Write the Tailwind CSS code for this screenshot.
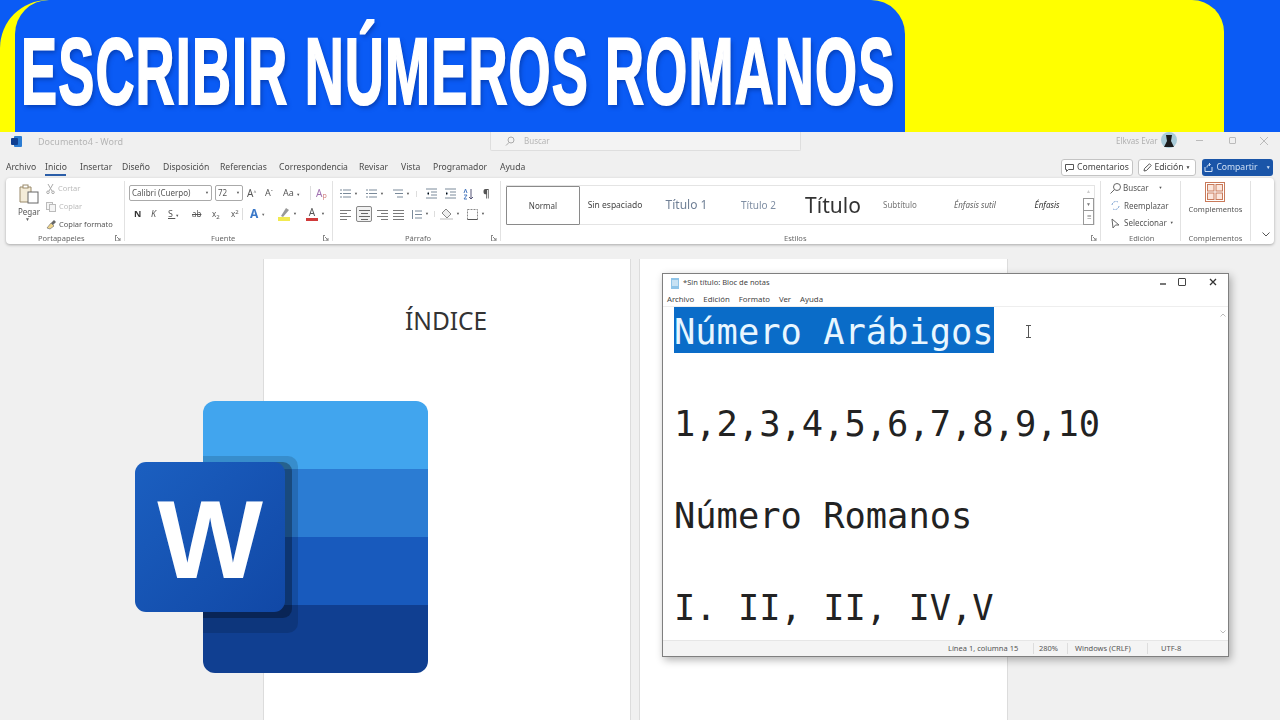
<!DOCTYPE html>
<html lang="es">
<head>
    <meta charset="UTF-8">
    <title>Escribir números romanos</title>
    <script src="https://cdn.jsdelivr.net/npm/@tailwindcss/browser@4"></script>
</head>
<body class="w-[1280px] h-[720px] overflow-hidden bg-[#f0f0f0] font-['Noto_Sans',sans-serif] text-[#444]">
<div class="relative w-[1280px] h-[720px] overflow-hidden">

    <!-- Banner -->
    <header class="h-[132px] bg-[#0a5bf5]">
        <div class="w-[1224px] h-full bg-[#ffff00] rounded-tl-[48px] rounded-tr-[32px]">
            <div class="ml-[15px] w-[890px] h-full bg-[#0a5bf5] rounded-t-[34px] pl-[6px] pt-[6px] overflow-hidden">
                <h1 class="origin-left scale-x-[0.575] whitespace-nowrap font-['Liberation_Sans',sans-serif] font-bold tracking-[2px] text-[94px] leading-[132px] text-white [-webkit-text-stroke:2px_white] [text-shadow:3px_3px_6px_rgba(0,40,130,0.55)]">ESCRIBIR NÚMEROS ROMANOS</h1>
            </div>
        </div>
    </header>

    <!-- Word window -->
    <div class="blur-[0.35px]">
        <!-- title bar -->
        <div class="h-[23px] pb-[4px] flex items-center relative">
            <svg class="ml-[11px] w-[11px] h-[11px]" viewBox="0 0 11 11"><rect x="3" y="0" width="8" height="11" rx="1" fill="#2b7cd3"/><rect x="0" y="2" width="7" height="7" rx="1" fill="#103f91"/></svg>
            <span class="ml-[16px] text-[9px] text-[#b5b5b5]">Documento4  -  Word</span>
            <div class="absolute left-[490px] top-0 w-[311px] h-[19px] bg-[#f3f3f3] border border-t-0 border-[#dedede] rounded-b-[2px] flex items-center pl-[14px] gap-[9px]">
                <svg class="w-[10px] h-[10px]" viewBox="0 0 10 10" fill="none" stroke="#aaa"><circle cx="6" cy="4" r="3"/><path d="M4 6.5 1 9.5"/></svg>
                <span class="text-[8px] text-[#b5b5b5]">Buscar</span>
            </div>
            <span class="absolute left-[1116px] top-[3px] text-[8px] text-[#b0b0b0]">Elkvas Evar</span>
            <svg class="absolute left-[1161px] top-[0px] w-[16px] h-[17px]" viewBox="0 0 16 17"><circle cx="8" cy="8" r="8" fill="#a9cbd8"/><path d="M5 3h6l-1 6 3 6H3l3-6z" fill="#1c1c1c"/></svg>
            <span class="absolute left-[1196px] top-[8px] w-[7px] h-px bg-[#bbb]"></span>
            <span class="absolute left-[1229px] top-[5px] w-[7px] h-[7px] border border-[#bbb] rounded-[1px]"></span>
            <svg class="absolute left-[1260px] top-[5px] w-[8px] h-[8px]" viewBox="0 0 8 8" stroke="#bbb"><path d="M0 0l8 8M8 0l-8 8"/></svg>
        </div>

        <!-- tabs -->
        <div class="h-[23px] relative">
            <nav class="flex pl-[6px] pt-[6px] text-[8.6px] leading-[12px] text-[#4a4a4a]">
                <span class="w-[39px]">Archivo</span>
                <span class="w-[35px] relative">Inicio<i class="absolute left-0 top-[13px] w-[21px] h-[2px] bg-[#2b5ea8]"></i></span>
                <span class="w-[42px]">Insertar</span>
                <span class="w-[41px]">Diseño</span>
                <span class="w-[57px]">Disposición</span>
                <span class="w-[59px]">Referencias</span>
                <span class="w-[80px]">Correspondencia</span>
                <span class="w-[42px]">Revisar</span>
                <span class="w-[32px]">Vista</span>
                <span class="w-[67px]">Programador</span>
                <span>Ayuda</span>
            </nav>
            <div class="absolute left-[1061px] top-[4px] flex gap-[5px] text-[8.6px] text-[#444]">
                <div class="w-[72px] h-[17px] border border-[#c4c4c4] rounded-[3px] bg-white flex items-center justify-center gap-[3px]">
                    <svg class="w-[9px] h-[8px]" viewBox="0 0 9 8" fill="none" stroke="#555"><path d="M.5.5h8v5h-5l-2 2v-2h-1z"/></svg>Comentarios
                </div>
                <div class="w-[58px] h-[17px] border border-[#c4c4c4] rounded-[3px] bg-white flex items-center justify-center gap-[2px]">
                    <svg class="w-[9px] h-[9px]" viewBox="0 0 9 9" fill="none" stroke="#555"><path d="M1 8l.5-2.5L6.5.8l1.7 1.7L3.5 7.500z"/></svg>Edición<span class="text-[5px]">▼</span>
                </div>
                <div class="ml-[1px] w-[71px] h-[17px] rounded-[3px] bg-[#1a55a8] text-[#cfe0f5] flex items-center justify-center gap-[3px]">
                    <svg class="w-[9px] h-[9px]" viewBox="0 0 9 9" fill="none" stroke="#cfe0f5"><path d="M1 4v4.500h7V4M3 4.500c0-2 1.500-3 3-3M5 0l1.500 1.500L5 3"/></svg>Compartir<span class="ml-[5px] text-[5px]">▼</span>
                </div>
            </div>
        </div>

        <!-- ribbon -->
        <div class="mx-[6px] h-[66px] bg-white rounded-[4px] shadow-[0_1px_3px_rgba(0,0,0,0.3)] flex text-[7.500px] text-[#555]">

            <!-- Portapapeles -->
            <section class="w-[119px] shrink-0 border-r border-[#e2e2e2] my-[3px] relative">
                <svg class="absolute left-[13px] top-[3px] w-[20px] h-[20px]" viewBox="0 0 20 20" fill="none" stroke="#9a8a6a"><path d="M1 3h11v15H1z" fill="#f4ecd8"/><rect x="4" y="1" width="5" height="3" fill="#fff"/><rect x="9" y="8" width="10" height="11" fill="#fff" stroke="#666"/></svg>
                <span class="absolute left-[12px] top-[25px] text-[8px] text-[#555]">Pegar</span>
                <span class="absolute left-[19px] top-[35px] text-[5px] text-[#666]">▼</span>
                <div class="absolute left-[40px] top-[1px] flex flex-col gap-[5px] text-[#bbb]">
                    <div class="h-[13px] flex items-center gap-[3px]"><svg class="w-[9px] h-[10px]" viewBox="0 0 9 10" fill="none" stroke="#aaa"><path d="M2 0l4 7M7 0 3 7"/><circle cx="2" cy="8.300" r="1.300"/><circle cx="7" cy="8.300" r="1.300"/></svg>Cortar</div>
                    <div class="h-[13px] flex items-center gap-[3px]"><svg class="w-[10px] h-[10px]" viewBox="0 0 10 10" fill="#f5f5f5" stroke="#bbb"><rect x=".5" y=".5" width="6" height="7"/><rect x="3.500" y="2.500" width="6" height="7"/></svg>Copiar</div>
                    <div class="h-[13px] flex items-center gap-[3px] text-[#555]"><svg class="w-[10px] h-[10px]" viewBox="0 0 10 10"><path d="M1 8l4-5 3 3-4 3z" fill="#f0d58a" stroke="#666" stroke-width=".6"/><path d="M5 3l3-3 2 2-3 3" fill="#666"/></svg>Copiar formato</div>
                </div>
                <span class="absolute left-[32px] top-[52px] text-[#666]">Portapapeles</span>
                <svg class="absolute right-[3px] top-[54px] w-[6px] h-[6px]" viewBox="0 0 6 6" fill="none" stroke="#888"><path d="M0 .5h2M.5 0v6h5.500M2 2l3 3M5 3v2H3"/></svg>
            </section>

            <!-- Fuente -->
            <section class="w-[208px] shrink-0 border-r border-[#e2e2e2] my-[3px] relative">
                <div class="absolute left-[4px] top-[4px] flex gap-[3px] text-[8px]">
                    <div class="w-[83px] h-[16px] border border-[#aaa] rounded-[2px] flex items-center justify-between px-[2px]"><span>Calibri (Cuerpo)</span><span class="text-[4px]">▼</span></div>
                    <div class="w-[28px] h-[16px] border border-[#aaa] rounded-[2px] flex items-center justify-between px-[2px]"><span>72</span><span class="text-[4px]">▼</span></div>
                </div>
                <div class="absolute left-[122px] top-[4px] h-[16px] w-[84px] flex items-center text-[10px] text-[#555]">
                    <span class="w-[18px]">A<sup class="text-[5px]">^</sup></span>
                    <span class="w-[18px] text-[9px]">A<sup class="text-[5px]">ˇ</sup></span>
                    <span class="w-[28px] text-[9px] border-r border-[#ddd]">Aa <i class="text-[4px] not-italic">▼</i></span>
                    <span class="ml-[5px] text-[#a070b0]">A<sub class="text-[7px] text-[#d08080]">p</sub></span>
                </div>
                <div class="absolute left-[8px] top-[24px] h-[18px] flex items-center text-[9px] text-[#555]">
                    <b class="w-[18px] pl-[1px] text-[#333]">N</b>
                    <i class="w-[17px]">K</i>
                    <span class="w-[18px] underline">S <i class="text-[4px] not-italic inline-block no-underline">▼</i></span>
                    <span class="ml-[6px] w-[20px] line-through text-[8px]">ab</span>
                    <span class="w-[19px] text-[8px]">x<sub class="text-[6px]">2</sub></span>
                    <span class="w-[12px] text-[8px] border-r border-[#ddd] pr-[10px]">x<sup class="text-[6px]">2</sup></span>
                    <b class="ml-[7px] w-[28px] text-[12px] text-[#3a78c8]">A<i class="ml-[3px] text-[4px] not-italic align-middle text-[#666]">▼</i></b>
                    <span class="w-[28px] flex items-center gap-[3px]"><svg class="w-[12px] h-[14px]" viewBox="0 0 12 14"><rect y="10" width="12" height="4" fill="#f2ea50"/><path d="M3 9l5-8 3 2-6 7z" fill="#999"/></svg><i class="text-[4px] not-italic">▼</i></span>
                    <span class="flex items-center gap-[3px]"><span class="w-[12px] h-[14px] flex flex-col items-center leading-[10px] text-[10px]">A<i class="mt-[1px] w-[12px] h-[3px] bg-[#d03a3a]"></i></span><i class="text-[4px] not-italic">▼</i></span>
                </div>
                <span class="absolute left-[86px] top-[52px] text-[#666]">Fuente</span>
                <svg class="absolute right-[3px] top-[54px] w-[6px] h-[6px]" viewBox="0 0 6 6" fill="none" stroke="#888"><path d="M0 .5h2M.5 0v6h5.500M2 2l3 3M5 3v2H3"/></svg>
            </section>

            <!-- Parrafo -->
            <section class="w-[168px] shrink-0 border-r border-[#e2e2e2] my-[3px] relative">
                <div class="absolute left-[7px] top-[5px] flex items-center gap-[3px]">
                    <svg class="w-[11px] h-[11px]" viewBox="0 0 11 11" stroke="#7a8a9a"><path d="M3 2h8M3 5.500h8M3 9h8M0 2h2M0 5.500h2M0 9h2"/></svg><i class="text-[4px] not-italic mr-[5px]">▼</i>
                    <svg class="w-[11px] h-[11px]" viewBox="0 0 11 11" stroke="#7a8a9a"><path d="M3 2h8M3 5.500h8M3 9h8M0 2h2M0 5.500h2M0 9h2"/></svg><i class="text-[4px] not-italic mr-[5px]">▼</i>
                    <svg class="w-[11px] h-[11px]" viewBox="0 0 11 11" stroke="#7a8a9a"><path d="M1 2h10M3 5.500h8M5 9h6"/></svg><i class="text-[4px] not-italic mr-[6px] pr-[6px] border-r border-[#ddd]">▼</i>
                    <svg class="w-[11px] h-[11px] mr-[5px]" viewBox="0 0 11 11" stroke="#7a8a9a"><path d="M0 1h11M5 4h6M5 7h6M0 10h11M3 4 1 5.500 3 7"/></svg>
                    <svg class="w-[11px] h-[11px] mr-[4px]" viewBox="0 0 11 11" stroke="#7a8a9a"><path d="M0 1h11M5 4h6M5 7h6M0 10h11M1 4l2 1.500L1 7"/></svg>
                    <svg class="w-[11px] h-[12px] mr-[4px] pl-0" viewBox="0 0 11 12" stroke="#557" fill="none"><path d="M8 1v10M6 9l2 2 2-2"/><path d="M1 5l1.500-4L4 5M1 7h3L1 11h3" stroke="#4a7ac0"/></svg>
                    <b class="ml-[2px] text-[10px] text-[#555]">¶</b>
                </div>
                <div class="absolute left-[7px] top-[24px] h-[18px] flex items-center gap-[5px]">
                    <svg class="w-[11px] h-[11px]" viewBox="0 0 11 11" stroke="#7a7a7a"><path d="M0 1.500h11M0 4.500h7M0 7.500h11M0 10.500h7"/></svg>
                    <span class="w-[16px] h-[16px] border border-[#888] rounded-[2px] bg-[#f1f1f1] flex items-center justify-center"><svg class="w-[11px] h-[11px]" viewBox="0 0 11 11" stroke="#666"><path d="M0 1.500h11M2 4.500h7M0 7.500h11M2 10.500h7"/></svg></span>
                    <svg class="w-[11px] h-[11px]" viewBox="0 0 11 11" stroke="#7a7a7a"><path d="M0 1.500h11M4 4.500h7M0 7.500h11M4 10.500h7"/></svg>
                    <svg class="w-[11px] h-[11px]" viewBox="0 0 11 11" stroke="#7a7a7a"><path d="M0 1.500h11M0 4.500h11M0 7.500h11M0 10.500h11"/></svg>
                    <svg class="ml-[2px] w-[11px] h-[11px]" viewBox="0 0 11 11" stroke="#7a8a9a"><path d="M4 2h7M4 5.500h7M4 9h7M1.500 1v9"/></svg><i class="text-[4px] not-italic -ml-[2px] pr-[5px] border-r border-[#ddd]">▼</i>
                    <svg class="w-[13px] h-[12px]" viewBox="0 0 13 12"><path d="M6 1l5 5-4 4-5-5z" fill="#eee" stroke="#888"/><rect y="10" width="13" height="2" fill="#ddd"/></svg><i class="text-[4px] not-italic -ml-[2px]">▼</i>
                    <svg class="ml-[2px] w-[11px] h-[11px]" viewBox="0 0 11 11" fill="none" stroke="#888"><path d="M.5.5h10v10H.5z" stroke-dasharray="2 1"/><path d="M.5 10.500h10" stroke="#555"/></svg><i class="text-[4px] not-italic -ml-[2px]">▼</i>
                </div>
                <span class="absolute left-[72px] top-[52px] text-[#666]">Párrafo</span>
                <svg class="absolute right-[3px] top-[54px] w-[6px] h-[6px]" viewBox="0 0 6 6" fill="none" stroke="#888"><path d="M0 .5h2M.5 0v6h5.500M2 2l3 3M5 3v2H3"/></svg>
            </section>

            <!-- Estilos -->
            <section class="w-[600px] shrink-0 border-r border-[#e2e2e2] my-[3px] relative pl-[5px] pt-[4px]">
                <div class="w-[589px] h-[40px] border-y border-r border-[#e4e4e4] flex items-center text-center relative">
                    <div class="w-[74px] h-[39px] border border-[#8a8a8a] rounded-[1px] leading-[37px] text-[8px] text-[#444]">Normal</div>
                    <div class="w-[70px] text-[8.500px] text-[#444]">Sin espaciado</div>
                    <div class="w-[73px] text-[12px] text-[#6f7f95]">Título 1</div>
                    <div class="w-[71px] text-[10px] text-[#7f8ea3]">Título 2</div>
                    <div class="w-[78px] text-[21px] leading-[24px] text-[#333]">Título</div>
                    <div class="w-[56px] text-[8px] text-[#777]">Subtítulo</div>
                    <div class="w-[94px] italic text-[8px] text-[#666]">Énfasis sutil</div>
                    <div class="w-[50px] italic text-[8px] text-[#333]">Énfasis</div>
                    <div class="absolute right-0 top-[-1px] w-[11px] h-[40px] flex flex-col items-center text-[5px] text-[#777]">
                        <span class="h-[13px] leading-[13px] text-[#ccc]">▲</span>
                        <span class="w-[11px] h-[13px] border border-[#999] leading-[11px]">▼</span>
                        <span class="w-[11px] h-[14px] border border-t-0 border-[#999] leading-[12px]">☰</span>
                    </div>
                </div>
                <span class="absolute left-[283px] top-[52px] text-[#666]">Estilos</span>
                <svg class="absolute right-[3px] top-[54px] w-[6px] h-[6px]" viewBox="0 0 6 6" fill="none" stroke="#888"><path d="M0 .5h2M.5 0v6h5.500M2 2l3 3M5 3v2H3"/></svg>
            </section>

            <!-- Edicion -->
            <section class="w-[80px] shrink-0 border-r border-[#e2e2e2] my-[3px] relative">
                <div class="absolute left-[9px] top-[-2px] flex flex-col text-[8px] text-[#555]">
                    <div class="h-[18px] flex items-center gap-[2px]"><svg class="w-[11px] h-[11px]" viewBox="0 0 11 11" fill="none" stroke="#666"><circle cx="7" cy="4" r="3.500"/><path d="M4.500 6.500.5 10.500"/></svg>Buscar<i class="ml-[8px] text-[4px] not-italic">▼</i></div>
                    <div class="h-[17px] flex items-center gap-[3px]"><svg class="w-[11px] h-[11px]" viewBox="0 0 11 11" fill="none" stroke="#7aa0d0"><path d="M2 5a4 4 0 0 1 6-3M9 6a4 4 0 0 1-6 3" stroke-dasharray="2 1"/></svg>Reemplazar</div>
                    <div class="h-[18px] flex items-center gap-[3px]"><svg class="w-[11px] h-[11px]" viewBox="0 0 11 11" fill="none" stroke="#666"><path d="M2 1l7 6H5.500L3 10z"/></svg>Seleccionar<i class="text-[4px] not-italic">▼</i></div>
                </div>
                <span class="absolute left-[28px] top-[52px] text-[#666]">Edición</span>
            </section>

            <!-- Complementos -->
            <section class="w-[70px] shrink-0 border-r border-[#e2e2e2] my-[3px] relative text-center">
                <svg class="absolute left-[24px] top-[1px] w-[20px] h-[20px]" viewBox="0 0 20 20" fill="#fbe6dc" stroke="#c97a5a"><rect x=".5" y=".5" width="19" height="19" fill="#fff"/><rect x="2.500" y="2.500" width="6.500" height="6.500"/><rect x="11" y="2.500" width="6.500" height="6.500"/><rect x="2.500" y="11" width="6.500" height="6.500"/><rect x="11" y="11" width="6.500" height="6.500"/></svg>
                <span class="absolute left-0 w-full top-[23px]">Complementos</span>
                <span class="absolute left-0 w-full top-[52px] text-[#666]">Complementos</span>
            </section>

            <svg class="ml-[11px] mt-[54px] w-[8px] h-[5px]" viewBox="0 0 8 5" fill="none" stroke="#555"><path d="M.5.5 4 4 7.500.5"/></svg>
        </div>
    </div>

    <!-- Document pages -->
    <main class="absolute left-0 top-[259px] w-full h-[461px] flex pl-[263px] gap-[8px]">
        <div class="w-[368px] bg-white border-x border-[#dcdcdc] pt-[44px] pl-[141px]">
            <p class="text-[24.500px] leading-[36px] text-[#333]">ÍNDICE</p>
        </div>
        <div class="w-[369px] bg-white border-x border-[#dcdcdc]"></div>
    </main>

    <!-- Word logo -->
    <svg class="absolute left-[135px] top-[401px] w-[293px] h-[272px]" viewBox="0 0 293 272">
        <defs>
            <clipPath id="sheet"><rect x="68" y="0" width="225" height="272" rx="12"/></clipPath>
            <linearGradient id="tile" x1="0" y1="0" x2="1" y2="1"><stop offset="0" stop-color="#1b5fc0"/><stop offset="1" stop-color="#1148a6"/></linearGradient>
        </defs>
        <g clip-path="url(#sheet)">
            <rect x="68" y="0" width="225" height="68" fill="#41a5ee"/>
            <rect x="68" y="68" width="225" height="68" fill="#2b7cd3"/>
            <rect x="68" y="136" width="225" height="68" fill="#185abd"/>
            <rect x="68" y="204" width="225" height="68" fill="#103f91"/>
            <rect x="20" y="55" width="143" height="177" rx="10" fill="#000" opacity=".14"/>
            <rect x="20" y="61" width="137" height="156" rx="9" fill="#000" opacity=".3"/>
        </g>
        <rect x="0" y="61" width="150" height="150" rx="11" fill="url(#tile)"/>
        <text x="75" y="177" text-anchor="middle" fill="#fff" font-family="Liberation Sans" font-weight="700" font-size="112">W</text>
    </svg>

    <!-- Notepad -->
    <div class="absolute left-[662px] top-[273px] w-[567px] h-[384px] bg-white border border-[#7f7f7f] shadow-[2px_3px_8px_rgba(0,0,0,0.3)] flex flex-col">
        <div class="h-[18px] shrink-0 flex items-center pl-[7px] gap-[3px] text-[7.500px] text-[#444] relative">
            <svg class="w-[10px] h-[11px]" viewBox="0 0 10 11"><rect x="1" y="0" width="8" height="11" fill="#8fc4e8"/><path d="M2 3h6M2 5h6M2 7h6" stroke="#fff"/></svg>
            <span>*Sin título: Bloc de notas</span>
            <span class="absolute left-[497px] top-[9px] w-[6px] h-[2px] bg-[#777]"></span>
            <span class="absolute left-[515px] top-[4px] w-[8px] h-[8px] border border-[#444] rounded-[1px]"></span>
            <svg class="absolute left-[546px] top-[4px] w-[8px] h-[8px]" viewBox="0 0 8 8" stroke="#333" stroke-width="1.300"><path d="M1 1l6 6M7 1 1 7"/></svg>
        </div>
        <div class="h-[15px] shrink-0 flex items-center pl-[4px] gap-[9px] pt-[1px] text-[7.800px] text-[#444] border-b border-[#eee]">
            <span>Archivo</span><span>Edición</span><span>Formato</span><span>Ver</span><span>Ayuda</span>
        </div>
        <div class="relative flex-1 pl-[11px] font-['DejaVu_Sans_Mono',monospace] text-[35.400px] leading-[42px] text-[#222] whitespace-nowrap">
            <p><span class="inline-block pt-[4px] bg-[#0a6cc8] text-[#e8f6ff]">Número Arábigos</span></p>
            <p class="pt-[4px]">&nbsp;</p>
            <p class="pt-[4px]">1,2,3,4,5,6,7,8,9,10</p>
            <p class="pt-[4px]">&nbsp;</p>
            <p class="pt-[4px]">Número Romanos</p>
            <p class="pt-[4px]">&nbsp;</p>
            <p class="pt-[4px]">I. II, II, IV,V</p>
            <svg class="absolute right-[2px] top-[6px] w-[6px] h-[4px]" viewBox="0 0 6 4" fill="none" stroke="#bbb"><path d="M.5 3.500 3 1l2.500 2.500"/></svg>
            <svg class="absolute right-[2px] bottom-[6px] w-[6px] h-[4px]" viewBox="0 0 6 4" fill="none" stroke="#bbb"><path d="M.5.5 3 3 5.500.5"/></svg>
            <svg class="absolute left-[362px] top-[18px] w-[7px] h-[13px]" viewBox="0 0 7 13" fill="none" stroke="#555"><path d="M1 .5h5M3.500.5v12M1 12.500h5"/></svg>
        </div>
        <div class="h-[16px] shrink-0 bg-[#f4f4f4] border-t border-[#e6e6e6] flex items-center text-[7.500px] text-[#555]">
            <span class="ml-[285px] w-[86px] border-r border-[#ddd]">Línea 1, columna 15</span>
            <span class="pl-[5px] w-[34px] border-r border-[#ddd]">280%</span>
            <span class="pl-[7px] w-[80px] border-r border-[#ddd]">Windows (CRLF)</span>
            <span class="pl-[13px]">UTF-8</span>
        </div>
    </div>
</div>
</body>
</html>
